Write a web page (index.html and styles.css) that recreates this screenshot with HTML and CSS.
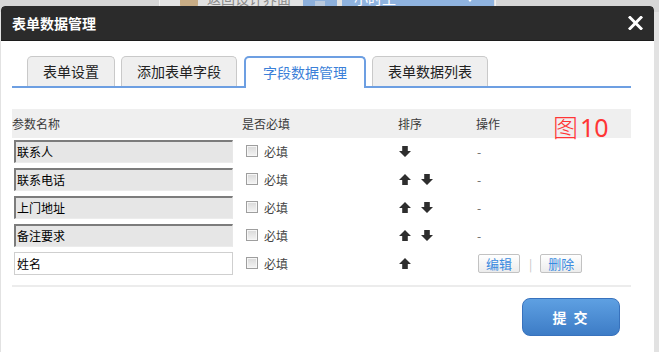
FILE: index.html
```html
<!DOCTYPE html>
<html lang="zh">
<head>
<meta charset="utf-8">
<title>表单数据管理</title>
<link rel="stylesheet" href="styles.css">
</head>
<body>
<div class="page">
  <div class="toolbar">
    <div class="tb-group">
      <span class="tb-icon"></span>
      <span class="tb-text">返回设计界面</span>
      <span class="tb-btn"><span class="tb-btn-bar"></span></span>
      <span class="tb-select">小时工<span class="tb-caret"></span></span>
    </div>
  </div>
</div>

<div class="dialog">
  <div class="dlg-head">
    <span class="dlg-title">表单数据管理</span>
    <svg class="dlg-close" width="15" height="14" viewBox="0 0 15 14"><path d="M2 1.5 L13 12.5 M13 1.5 L2 12.5" stroke="#fff" stroke-width="3" stroke-linecap="square"/></svg>
  </div>
  <div class="dlg-body">
    <div class="tabs">
      <span class="tab">表单设置</span>
      <span class="tab">添加表单字段</span>
      <span class="tab tab-active">字段数据管理</span>
      <span class="tab">表单数据列表</span>
    </div>

    <div class="grid">
      <div class="hcell">参数名称</div>
      <div class="hcell">是否必填</div>
      <div class="hcell">排序</div>
      <div class="hcell">操作</div>

      <div class="cell"><input class="field field-ro" readonly value="联系人"></div>
      <div class="cell"><span class="chk"></span><span class="req">必填</span></div>
      <div class="cell sort">
        <svg class="arr" width="12" height="11" viewBox="0 0 12 11"><path d="M6 11 L12 5 H8.8 V0 H3.2 V5 H0 Z"/></svg>
      </div>
      <div class="cell op">-</div>

      <div class="cell"><input class="field field-ro" readonly value="联系电话"></div>
      <div class="cell"><span class="chk"></span><span class="req">必填</span></div>
      <div class="cell sort">
        <svg class="arr" width="12" height="11" viewBox="0 0 12 11"><path d="M6 0 L12 6 H8.8 V11 H3.2 V6 H0 Z"/></svg>
        <svg class="arr" width="12" height="11" viewBox="0 0 12 11"><path d="M6 11 L12 5 H8.8 V0 H3.2 V5 H0 Z"/></svg>
      </div>
      <div class="cell op">-</div>

      <div class="cell"><input class="field field-ro" readonly value="上门地址"></div>
      <div class="cell"><span class="chk"></span><span class="req">必填</span></div>
      <div class="cell sort">
        <svg class="arr" width="12" height="11" viewBox="0 0 12 11"><path d="M6 0 L12 6 H8.8 V11 H3.2 V6 H0 Z"/></svg>
        <svg class="arr" width="12" height="11" viewBox="0 0 12 11"><path d="M6 11 L12 5 H8.8 V0 H3.2 V5 H0 Z"/></svg>
      </div>
      <div class="cell op">-</div>

      <div class="cell"><input class="field field-ro" readonly value="备注要求"></div>
      <div class="cell"><span class="chk"></span><span class="req">必填</span></div>
      <div class="cell sort">
        <svg class="arr" width="12" height="11" viewBox="0 0 12 11"><path d="M6 0 L12 6 H8.8 V11 H3.2 V6 H0 Z"/></svg>
        <svg class="arr" width="12" height="11" viewBox="0 0 12 11"><path d="M6 11 L12 5 H8.8 V0 H3.2 V5 H0 Z"/></svg>
      </div>
      <div class="cell op">-</div>

      <div class="cell"><input class="field" value="姓名"></div>
      <div class="cell"><span class="chk"></span><span class="req">必填</span></div>
      <div class="cell sort">
        <svg class="arr" width="12" height="11" viewBox="0 0 12 11"><path d="M6 0 L12 6 H8.8 V11 H3.2 V6 H0 Z"/></svg>
      </div>
      <div class="cell op">
        <span class="mini-btn">编辑</span>
        <span class="sep">|</span>
        <span class="mini-btn">删除</span>
      </div>
    </div>

    <div class="rule"></div>

    <div class="footer">
      <button class="submit" type="button">提 交</button>
    </div>
  </div>
  <div class="annot"><span class="annot-fig">图</span>10</div>
</div>
</body>
</html>
```

FILE: styles.css
```css
html, body {
  margin: 0;
  padding: 0;
}
body {
  width: 659px;
  height: 352px;
  overflow: hidden;
  background: #e2e2e2;
  position: relative;
  font-family: "Noto Sans CJK SC", "Noto Sans", sans-serif;
}

/* page behind the modal */
.page {
  height: 352px;
  overflow: hidden;
}
.toolbar {
  height: 28px;
  margin-top: -16px;
  background: #d6d6d6;
  display: flex;
  padding-left: 159px;
}
.tb-group {
  width: 335px;
  display: flex;
  align-items: center;
  background: #e2e2e2;
  border-left: 1px solid #f0f0f0;
  border-right: 1px solid #f0f0f0;
}
.tb-icon {
  width: 18px;
  height: 18px;
  margin-left: 20px;
  background: #c9ad86;
  border-radius: 2px;
}
.tb-text {
  margin-left: 9px;
  font-size: 14px;
  line-height: 16px;
  color: #8a8a8a;
}
.tb-btn {
  width: 34px;
  height: 26px;
  margin-left: 12px;
  background: #8db0dc;
  border-radius: 3px;
  display: flex;
  justify-content: center;
  align-items: flex-end;
}
.tb-btn-bar {
  width: 10px;
  height: 8px;
  background: #b9c9de;
  margin-bottom: 2px;
}
.tb-select {
  width: 152px;
  height: 26px;
  margin-left: 5px;
  background: #8fb3df;
  border-radius: 3px 0 0 3px;
  color: #fff;
  font-size: 14px;
  line-height: 16px;
  display: flex;
  align-items: center;
  padding-left: 12px;
  box-sizing: border-box;
}
.tb-caret {
  margin-left: auto;
  margin-right: 18px;
  width: 0;
  height: 0;
  border-left: 6px solid transparent;
  border-right: 6px solid transparent;
  border-top: 7px solid #fff;
}

/* modal */
.dialog {
  position: absolute;
  left: 1px;
  top: 6px;
  bottom: 0;
  width: 653px;
  background: #fff;
  border-radius: 4px 4px 0 0;
  overflow: hidden;
}
.dlg-head {
  height: 35px;
  background: #2b2b2b;
  border-radius: 4px 4px 0 0;
  display: flex;
  align-items: center;
  justify-content: space-between;
  padding: 0 11px 0 11px;
  border-bottom: 1px solid #1c1c1c;
  box-sizing: border-box;
}
.dlg-title {
  color: #fff;
  font-size: 14px;
  font-weight: bold;
}
.dlg-close {
  display: block;
}
.dlg-body {
  padding: 15px 23px 0 11px;
}

/* tabs */
.tabs {
  display: flex;
  gap: 6px;
  padding-left: 15px;
  border-bottom: 2px solid #6d9fe2;
  height: 30px;
}
.tab {
  height: 30px;
  box-sizing: border-box;
  padding: 0 15px;
  border: 1px solid #c9c9c9;
  border-bottom: none;
  border-radius: 5px 5px 0 0;
  background: #efefef;
  color: #222;
  font-size: 14px;
  line-height: 29px;
  white-space: nowrap;
}
.tab-active {
  background: #fff;
  border: 2px solid #6d9fe2;
  border-bottom: none;
  color: #3b7fd8;
  padding: 0 17px;
  line-height: 28px;
  height: 32px;
  margin-left: 1px;
}

/* grid */
.grid {
  margin-top: 21px;
  display: grid;
  grid-template-columns: 230px 156px 78px 1fr;
  grid-auto-rows: 28px;
}
.hcell {
  height: 29px;
  background: #efefef;
  font-size: 12px;
  color: #3a3a3a;
  display: flex;
  align-items: center;
}
.cell {
  display: flex;
  align-items: center;
  font-size: 12px;
  color: #333;
}
.field {
  width: 219px;
  height: 23px;
  box-sizing: border-box;
  margin-left: 2px;
  padding: 0 0 0 2px;
  font-family: "Noto Sans CJK SC", "Noto Sans", sans-serif;
  font-size: 12px;
  color: #000;
  border: 1px solid #cfcfcf;
  background: #fff;
  outline: none;
}
.field-ro {
  background: #e6e6e6;
  border-top: 2px solid #7c7c7c;
  border-left: 2px solid #7c7c7c;
  border-right: 1px solid #e8e8e8;
  border-bottom: 1px solid #ececec;
  padding-left: 1px;
}
.chk {
  width: 12px;
  height: 12px;
  box-sizing: border-box;
  margin-left: 4px;
  border: 1px solid #9e9e9e;
  background: linear-gradient(#d9d9d9, #f4f4f4);
  box-shadow: inset 0 0 0 1px #f6f6f6;
}
.req {
  margin-left: 6px;
  color: #444;
}
.sort {
  gap: 10px;
  padding-left: 1px;
}
.arr {
  display: block;
  fill: #2e2e2e;
}
.op {
  padding-left: 1px;
  color: #666;
}
.mini-btn {
  height: 19px;
  box-sizing: border-box;
  padding: 0 7px;
  border: 1px solid #c2c2c2;
  border-radius: 2px;
  background: linear-gradient(#ffffff, #ececec);
  color: #3a8be0;
  font-size: 13px;
  line-height: 17px;
  margin-left: 1px;
}
.sep {
  color: #c4c4c4;
  margin: 0 7px 0 9px;
}

.rule {
  margin-top: 8px;
  height: 2px;
  background: #ececec;
}
.footer {
  display: flex;
  justify-content: flex-end;
  padding: 11px 11px 0 0;
}
.submit {
  width: 98px;
  height: 38px;
  border: 1px solid #3872bd;
  border-radius: 8px;
  background: linear-gradient(#5ea0e2, #3d7cc6);
  color: #fff;
  font-family: "Noto Sans CJK SC", "Noto Sans", sans-serif;
  font-size: 14px;
  font-weight: bold;
  letter-spacing: 2px;
  padding: 0;
}

/* annotation overlay */
.annot {
  position: absolute;
  left: 552px;
  top: 102px;
  color: #ff3535;
  font-size: 25px;
  line-height: 36px;
  font-family: "Noto Sans", "Noto Sans CJK SC", sans-serif;
  white-space: nowrap;
}
.annot-fig {
  font-family: "Noto Sans CJK SC", sans-serif;
  font-weight: 300;
  margin-right: 2px;
}
```
